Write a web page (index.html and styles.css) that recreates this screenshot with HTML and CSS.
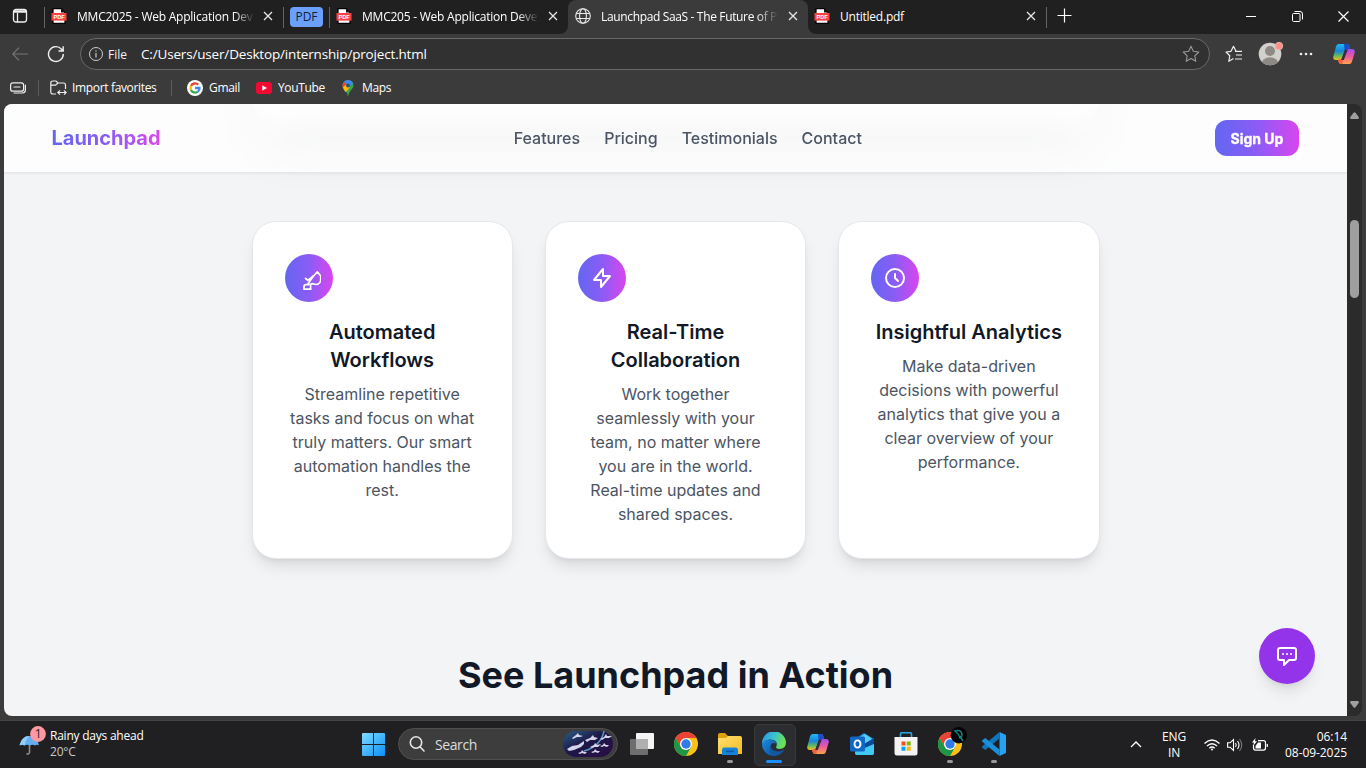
FILE: index.html
```html
<!DOCTYPE html>
<html lang="en">
<head>
<meta charset="utf-8">
<title>Launchpad SaaS - The Future of Productivity</title>
<link rel="stylesheet" href="styles.css">
</head>
<body>
<svg class="defs" width="0" height="0">
  <defs>
    <linearGradient id="cpA" x1="0" y1="0" x2="0" y2="1"><stop offset="0" stop-color="#22b8f5"/><stop offset=".45" stop-color="#1686d9"/><stop offset=".72" stop-color="#5fb865"/><stop offset="1" stop-color="#f2c313"/></linearGradient>
    <linearGradient id="cpB" x1="0" y1="0" x2="0" y2="1"><stop offset="0" stop-color="#a24cf0"/><stop offset=".5" stop-color="#ec5a9c"/><stop offset="1" stop-color="#fda44b"/></linearGradient>
    <linearGradient id="win" x1="0" y1="0" x2="1" y2="1"><stop offset="0" stop-color="#7fdcff"/><stop offset="1" stop-color="#0a8ff5"/></linearGradient>
    <linearGradient id="fold" x1="0" y1="0" x2="1" y2="1"><stop offset="0" stop-color="#ffe074"/><stop offset="1" stop-color="#f8ba1e"/></linearGradient>
    <linearGradient id="edgeTop" x1="0" y1="0" x2="1" y2=".3"><stop offset="0" stop-color="#2391df"/><stop offset=".5" stop-color="#38bfd6"/><stop offset="1" stop-color="#6be354"/></linearGradient>
    <linearGradient id="edgeLow" x1="0" y1="0" x2="1" y2="1"><stop offset="0" stop-color="#1b8ce0"/><stop offset="1" stop-color="#0b4f9f"/></linearGradient>
    <linearGradient id="fish" x1="0" y1="0" x2="1" y2="1"><stop offset="0" stop-color="#285f86"/><stop offset=".45" stop-color="#1d1748"/><stop offset="1" stop-color="#2a0d45"/></linearGradient>
    <symbol id="pdf" viewBox="0 0 16 16"><path d="M2 .7h8.2L14 4.5v10.8H2z" fill="#fff" stroke="#000" stroke-width="1.2"/><path d="M10 .7v3.8h4z" fill="#111"/><rect x=".5" y="5" width="15" height="7.6" fill="#f8423f"/><text x="8" y="10.9" text-anchor="middle" class="pdf-word">PDF</text></symbol>
    <symbol id="close" viewBox="0 0 10 10"><path d="M1 1l8 8M9 1L1 9" stroke="#e6e6e6" stroke-width="1.3" fill="none"/></symbol>
    <symbol id="copilot" viewBox="0 0 22 20"><path d="M5.500 0H14q1.700 0 2.300 2l.8 3H14q-2 0-2.600 2L9 14.200Q8.300 16 6.500 16H3Q-.3 16 .3 12.500L3 2.500Q3.700 0 5.500 0z" fill="url(#cpA)"/><path d="M11 0h3.200q1.600 0 2.200 2l.9 3.300H14q-1.800 0-2.400 1.700z" fill="#1a4fc4"/><path d="M16.500 20H8q-1.700 0-2.300-2l-.7-2.500h2q2.500 0 3.200-2.200L12.600 7Q13.300 5 15 5h4q3.300 0 2.700 3.500L19 17.500q-.7 2.500-2.500 2.500z" fill="url(#cpB)"/><path d="M8 20q-1.700 0-2.300-2L5 15.500h2q2.500 0 3.200-2.200L9.500 20z" fill="#f2653b"/><path d="M12.200 5.500h2.600l-4 10.500H8.200z" fill="#3a2a3a"/></symbol>
    <symbol id="chrome" viewBox="0 0 24 24"><circle cx="12" cy="12" r="12" fill="#fbc116"/><path d="M1.600 6A12 12 0 0 1 22.400 6H12L7 15z" fill="#ea4335"/><path d="M1.600 6A12 12 0 0 0 12 24L17.200 15 7 15z" fill="#1e9648"/><circle cx="12" cy="12" r="6" fill="#fff"/><circle cx="12" cy="12" r="4.700" fill="#2f7bea"/></symbol>
  </defs>
</svg>

<div class="tabstrip">
  <div class="strip-left">
    <div class="workspace"><svg width="16" height="16" viewBox="0 0 16 16" fill="none" stroke="#eee" stroke-width="1.300"><rect x="1.500" y="1.500" width="13" height="12.500" rx="2.500"/><path d="M1.500 3.500h13" stroke-width="2.500"/><path d="M5.500 5v9"/></svg></div>
    <div class="tab first"><svg class="fav"><use href="#pdf"/></svg><span class="tab-title fade">MMC2025 - Web Application Dev</span><svg class="x"><use href="#close"/></svg></div>
    <div class="group"><span class="group-chip">PDF</span></div>
    <div class="tab second"><svg class="fav"><use href="#pdf"/></svg><span class="tab-title fade">MMC205 - Web Application Deve</span><svg class="x"><use href="#close"/></svg></div>
  </div>
  <div class="active-wrap"><div class="tab active"><svg class="globe" viewBox="0 0 16 16" fill="none" stroke="#e8e8e8" stroke-width="1.100"><circle cx="8" cy="8" r="7.300"/><ellipse cx="8" cy="8" rx="3.400" ry="7.300"/><path d="M1.200 5.500h13.600M1.200 10.500h13.600"/></svg><span class="tab-title fade">Launchpad SaaS - The Future of P</span><svg class="x"><use href="#close"/></svg></div></div>
  <div class="strip-right">
    <div class="tab last"><svg class="fav"><use href="#pdf"/></svg><span class="tab-title">Untitled.pdf</span><svg class="x"><use href="#close"/></svg></div>
    <div class="plus"><svg width="15" height="15" viewBox="0 0 15 15" stroke="#fff" stroke-width="1.200"><path d="M7.500 .5v14M.5 7.500h14"/></svg></div>
    <div class="win-controls">
      <span><svg width="10" height="10" viewBox="0 0 10 10"><path d="M0 4.500h10" stroke="#fff"/></svg></span>
      <span><svg width="11" height="11" viewBox="0 0 11 11" fill="none" stroke="#fff"><rect x=".5" y="2.500" width="7.500" height="8" rx="1"/><path d="M2.500 .5H8q2.500 0 2.500 2.500v5.500"/></svg></span>
      <span><svg width="11" height="11" viewBox="0 0 11 11" stroke="#fff" stroke-width="1.200"><path d="M.5 .5l10 10M10.500 .5l-10 10"/></svg></span>
    </div>
  </div>
</div>

<div class="toolbar">
  <svg class="back" width="16" height="14" viewBox="0 0 16 14" fill="none" stroke="#777" stroke-width="1.100"><path d="M16 7H.8M7 .7L.7 7 7 13.300"/></svg>
  <svg class="reload" width="18" height="18" viewBox="0 0 18 18" fill="none" stroke="#eee" stroke-width="1.400"><path d="M16.300 9A7.400 7.400 0 1 1 14.500 4.200L16 6M16.200 1.300V6H11.500"/></svg>
  <div class="address">
    <svg width="14" height="14" viewBox="0 0 14 14" fill="none" stroke="#ccc"><circle cx="7" cy="7" r="6.500"/><path d="M7 6v4.500M7 3.400v1.300" stroke-width="1.200"/></svg>
    <span class="file">File</span><span class="url">C:/Users/user/Desktop/internship/project.html</span>
    <svg class="star" width="18" height="18" viewBox="0 0 18 18" fill="none" stroke="#999" stroke-width="1.100" stroke-linejoin="round"><path d="M9 1.300l2.300 5 5.500.7-4 3.800 1 5.500L9 13.600l-4.800 2.700 1-5.500-4-3.800 5.500-.7z"/></svg>
  </div>
  <svg class="favs" width="18" height="18" viewBox="0 0 18 18" fill="none" stroke="#eee" stroke-width="1.200" stroke-linejoin="round"><path d="M11 6.300L8.500 1.300 6 6.300l-5 .7 3.800 3.700-1 5.600 4.700-2.700M10 6.300h7M11 10h6M10 14h7"/></svg>
  <svg class="avatar" width="26" height="26" viewBox="0 0 26 26"><clipPath id="av"><circle cx="12" cy="14" r="11.300"/></clipPath><circle cx="12" cy="14" r="11.300" fill="#d2d0cd"/><g clip-path="url(#av)" fill="#8d8a86"><circle cx="12" cy="11" r="5"/><ellipse cx="12" cy="24" rx="8.500" ry="6.800"/></g><circle cx="21" cy="6" r="3.700" fill="#ff8f87" stroke="#e9b0aa"/></svg>
  <svg class="dots" width="14" height="4" viewBox="0 0 14 4" fill="#eee"><circle cx="2" cy="2" r="1.300"/><circle cx="7" cy="2" r="1.300"/><circle cx="12" cy="2" r="1.300"/></svg>
  <svg class="cp" width="22" height="20"><use href="#copilot"/></svg>
</div>

<div class="bookmarks">
  <svg class="bm-ws" width="16" height="12" viewBox="0 0 16 12" fill="none" stroke="#eee" stroke-width="1.200"><rect x=".6" y=".8" width="13" height="8.400" rx="2.300"/><path d="M4 5h6M15.400 3v5q0 3-3 3H4" stroke-linecap="round"/></svg>
  <i class="sep"></i>
  <svg class="bm-imp" width="17" height="16" viewBox="0 0 17 16" fill="none" stroke="#eee" stroke-width="1.200"><path d="M6 14H3Q.8 14 .8 12V3Q.8 1 3 1h3l2 2h5.500Q15.500 3 15.500 5v4M.8 5.200h4.700L8 3M8 12.500h8M10 10.300L7.800 12.500 10 14.700M14 10.300l2.200 2.200L14 14.700"/></svg>
  <span class="bm-import">Import favorites</span>
  <i class="sep two"></i>
  <svg class="bm-g" width="16" height="16" viewBox="0 0 16 16" fill="none" stroke-width="2.300"><circle cx="8" cy="8" r="8" fill="#fff"/><path d="M11.200 4.700A4.500 4.500 0 0 0 4 6" stroke="#ea4335"/><path d="M4 6a4.500 4.500 0 0 0 0 4" stroke="#fbbc05"/><path d="M4 10a4.500 4.500 0 0 0 7 1.500" stroke="#34a853"/><path d="M11 11.500A4.500 4.500 0 0 0 12.500 8H8" stroke="#4285f4"/></svg>
  <span class="bm-gmail">Gmail</span>
  <svg class="bm-y" width="16" height="12" viewBox="0 0 16 12"><rect width="16" height="12" rx="3" fill="#f60631"/><path d="M6.300 3.300v5.400L11 6z" fill="#fff"/></svg>
  <span class="bm-yt">YouTube</span>
  <svg class="bm-m" width="12" height="16" viewBox="0 0 12 16"><path d="M6 0a5.500 5.500 0 0 1 5.500 5.500C11.500 9 7.300 10 6.200 16H5.800C5 10 .5 9 .5 5.500A5.500 5.500 0 0 1 6 0z" fill="#34a853"/><path d="M6 0a5.500 5.500 0 0 1 5.100 3.500L6 7 1.800 2A5.500 5.500 0 0 1 6 0z" fill="#4285f4"/><path d="M1.800 2L5 4.800.7 7.500Q-.2 4.500 1.800 2z" fill="#ea4335"/><path d="M.8 7.300l4-3 3 3-4 5Q1.500 9.700.8 7.300z" fill="#fbbc05"/><circle cx="6" cy="5.400" r="2" fill="#31507a"/></svg>
  <span class="bm-maps">Maps</span>
</div>

<div class="viewport">
  <div class="page">
    <div class="hero-panel"></div>
    <header class="site-header">
      <div class="logo"><span>Launchpad</span></div>
      <nav><a>Features</a><a>Pricing</a><a>Testimonials</a><a>Contact</a></nav>
      <button class="signup">Sign Up</button>
    </header>
    <main>
      <section class="cards">
        <article class="card"><div class="badge"><svg class="flow" viewBox="0 0 24 24"><path d="M8 12l2.800 2.300 3.500-2.600 1.700-2M10.500 18.600L15 12l5.300-6.300 3.500 4.500M23.700 10v5q-1.600 3.500-4.700 3.500l-4-.8-3.500 1H9q-2 0-2 2v4M7 23.200h7.500M13.600 24v-5.500"/></svg></div><h3>Automated Workflows</h3><p>Streamline repetitive tasks and focus on what truly matters. Our smart automation handles the rest.</p></article>
        <article class="card"><div class="badge"><svg viewBox="0 0 24 24"><path d="M13 10V3L4 14h7v7l9-11h-7z"/></svg></div><h3>Real-Time Collaboration</h3><p>Work together seamlessly with your team, no matter where you are in the world. Real-time updates and shared spaces.</p></article>
        <article class="card"><div class="badge"><svg viewBox="0 0 24 24"><path d="M12 8v4l3 3m6-3a9 9 0 11-18 0 9 9 0 0118 0z"/></svg></div><h3>Insightful Analytics</h3><p>Make data-driven decisions with powerful analytics that give you a clear overview of your performance.</p></article>
      </section>
      <h2>See Launchpad in Action</h2>
    </main>
    <button class="chat"><svg viewBox="0 0 24 24"><path d="M8 10h.01M12 10h.01M16 10h.01M9 16H5a2 2 0 01-2-2V6a2 2 0 012-2h14a2 2 0 012 2v8a2 2 0 01-2 2h-5l-5 5v-5z"/></svg></button>
  </div>
  <div class="scrollbar">
    <svg width="9" height="7" viewBox="0 0 9 7"><path d="M3.500 .8q1-1.300 2 0L8.700 5q.6 2-1 2H1.300Q-.3 7 .3 5z" fill="#9f9f9f"/></svg>
    <i></i>
    <svg width="9" height="7" viewBox="0 0 9 7"><path d="M3.500 6.200q1 1.300 2 0L8.700 2q.6-2-1-2H1.300Q-.3 0 .3 2z" fill="#9f9f9f"/></svg>
  </div>
</div>

<div class="taskbar">
  <div class="weather">
    <svg width="28" height="32" viewBox="0 0 28 32"><path d="M10.500 18v9.500q-1 2.500-3 1" fill="none" stroke="#8b8b8b" stroke-width="1.600"/><path d="M.5 20.500Q2.500 11 10.500 11t9.500 9.500q-2-1.500-4 0-2.500-1.500-5 0-3-1.500-5.500 0-2.500-1.500-5 0z" fill="#61aef0"/><path d="M.5 20.500Q2.500 11 10.500 11 7 14 5.500 20.500q-2.500-1.500-5 0z" fill="#91cdf8"/><circle cx="19" cy="9" r="7.900" fill="#ff97a0"/><text x="19.200" y="13.300" text-anchor="middle" class="badge-num">1</text></svg>
    <div><div class="w1">Rainy days ahead</div><div class="w2">20°C</div></div>
  </div>
  <div class="start"><svg width="23" height="23" viewBox="0 0 23 23"><path d="M1 0h10v11H0V1q0-1 1-1zM12 0h10q1 0 1 1v10H12zM0 12h11v11H1q-1 0-1-1zM12 12h11v10q0 1-1 1H12z" fill="url(#win)"/></svg></div>
  <div class="search">
    <svg class="lens" width="16" height="16" viewBox="0 0 16 16" fill="none" stroke="#e6e6e6" stroke-width="1.600"><circle cx="7" cy="6.500" r="5.700"/><path d="M11 10.700l4 4.300" stroke-linecap="round"/></svg>
    <span>Search</span>
    <svg class="fishes" width="50" height="26" viewBox="0 0 50 26"><rect width="50" height="26" rx="13" fill="url(#fish)"/><path d="M41 0q-3 15-20 20" stroke="#5898bd" stroke-width="1.500" fill="none"/><g fill="#d4d5eb"><path d="M4 18l5-3 6-1 6-4v3l-3 3-7 3-5 1zM9 7l4-3 2-2 1 2 4 1-3 1-3 0-4 2zM22 9l5-2 3-3 1 2 4 1-3 2-5 0-3 2zM37 8l4-2 2-3 1 2 5 0-3 2-4 0-3 2zM27 16l4-2 1-2 2 2 4-1-3 3-4 0-2 1zM15 22l3-1 1-2 2 2 3 0-2 2-3-1-2 1zM28 21l3-1 1-2 2 2 3 0-2 2-3-1-2 1zM37 15l3-1 1-2 2 2 3 0-2 2-3-1-2 1z"/></g></svg>
  </div>
  <div class="apps">
    <div class="app"><svg width="24" height="22" viewBox="0 0 24 22"><rect x="6" width="18" height="16" rx="1" fill="#f5f5f5"/><rect y="6" width="18" height="16" rx="1" fill="#777" opacity=".9"/><rect x="6" y="6" width="12" height="10" fill="#b0b0b0"/></svg></div>
    <div class="app"><svg width="24" height="24"><use href="#chrome"/></svg></div>
    <div class="app run"><svg width="24" height="22" viewBox="0 0 24 22"><path d="M0 2q0-2 2-2h5l3 3h12v5H0z" fill="#e0a008"/><path d="M0 5h8l2-2h12q2 0 2 2v16H0z" fill="url(#fold)"/><path d="M4 22v-5q0-2.500 2.500-2.500h11Q20 14.500 20 17v5z" fill="#1683d8"/><rect x="8" y="17.500" width="8" height="1.800" rx=".9" fill="#0a5ca8"/></svg></div>
    <div class="app current"><svg width="24" height="24" viewBox="0 0 24 24"><path d="M0 12A12 12 0 0 1 24 10.500Q24 17 17.500 17 13 17 14.500 14 16 8.500 10 7.700 4 7 0 12z" fill="url(#edgeTop)"/><path d="M0 12Q2 7.500 9 7.700q5 .5 5.500 4-5-2-6 2.800Q8.500 20 14 23.800A12 12 0 0 1 0 12z" fill="url(#edgeLow)"/><path d="M8.500 13.500Q9 18.500 15 19.300q4 .5 7.500-2Q19 24 12.500 24 5.500 21 8.500 13.500z" fill="#12579f"/></svg></div>
    <div class="app"><svg width="22" height="20"><use href="#copilot"/></svg></div>
    <div class="app"><svg width="24" height="22" viewBox="0 0 24 22"><path d="M5 6l9-6 10 6v14q0 2-2 2H7q-2 0-2-2z" fill="#1692e2"/><path d="M8 5l7-4 7 5-7 8z" fill="#58ccf5"/><path d="M14 11l10-6v6l-9 6z" fill="#084a98"/><path d="M5 19l19-8v9q0 2-2 2H7q-2 0-2-2z" fill="#42c8f2"/><rect y="3.500" width="15" height="15" rx="1.500" fill="#0f68c4"/><ellipse cx="7.500" cy="11" rx="3" ry="3.600" fill="none" stroke="#fff" stroke-width="1.900"/></svg></div>
    <div class="app"><svg width="24" height="24" viewBox="0 0 24 24"><path d="M6.500 6V2q0-1.300 1.300-1.300h8.400q1.300 0 1.300 1.300v4" fill="none" stroke="#25a9e6" stroke-width="1.600"/><path d="M.5 5h23v16q0 2.500-2.500 2.500H3Q.5 23.500 .5 21z" fill="#f3f3f3"/><path d="M7.500 9.500h4v4h-4z" fill="#f25022"/><path d="M12.700 9.500h4v4h-4z" fill="#7fba00"/><path d="M7.500 14.700h4v4h-4z" fill="#00a4ef"/><path d="M12.700 14.700h4v4h-4z" fill="#ffb900"/></svg></div>
    <div class="app run profile"><svg width="29" height="29" viewBox="0 0 29 29"><use href="#chrome" x="0" y="5" width="24" height="24"/><circle cx="20.800" cy="8.200" r="8.200" fill="#000"/><path d="M17 4q6-2 7 3 0 4-2 4-1-4-5-7zM22 9l3 5" fill="none" stroke="#16827f" stroke-width="1.500"/></svg></div>
    <div class="app run"><svg width="24" height="24" viewBox="0 0 24 24"><path d="M17.500 0L24 3v18l-6.500 3z" fill="#26a2ee"/><path d="M17.500 0v6.500L3.300 18 .3 15.700q-.6-.8 0-1.500z" fill="#0f75bd"/><path d="M17.500 24v-6.500L3.300 6 .3 8.300q-.6.800 0 1.500z" fill="#1c8fdb"/></svg></div>
  </div>
  <div class="tray">
    <svg class="chev" width="12" height="7" viewBox="0 0 12 7" fill="none" stroke="#fff" stroke-width="1.400"><path d="M1 6l5-5 5 5"/></svg>
    <div class="lang">ENG<br>IN</div>
    <svg class="wifi" width="16" height="12" viewBox="0 0 16 12" fill="none" stroke="#fff" stroke-width="1.300"><path d="M.5 4.500q7.500-7 15 0M3 7q5-4.600 10 0M5.300 9.300q2.700-2.500 5.400 0"/><circle cx="8" cy="10.500" r="1" fill="#fff" stroke="none"/></svg>
    <svg class="vol" width="16" height="14" viewBox="0 0 16 14" fill="none" stroke="#fff" stroke-width="1.100"><path d="M.6 4.800h2.500L6.500 1.500v11L3.100 9.200H.6zM8.500 5q1.500 2 0 4M10.500 3q3 4 0 8"/><path d="M12.500 1q4.500 6 0 12" stroke="#777"/></svg>
    <svg class="bat" width="16" height="13" viewBox="0 0 16 13" fill="none" stroke="#fff" stroke-width="1.200"><path d="M6 2.600h5.500q2 0 2 2v5.500q0 2-2 2H3.500q-2 0-2-2V7M15.300 6v3"/><path d="M6 4.500h3v6H3.500V8z" fill="#fff" stroke="none"/><path d="M3.500 0L0 4.500h2L1 8l4-4.700H3z" fill="#fff" stroke="none"/></svg>
    <div class="clock">06:14<br>08-09-2025</div>
  </div>
</div>
</body>
</html>
```
FILE: styles.css
```css
* { box-sizing: border-box; }
html, body { margin: 0; height: 100%; overflow: hidden; }
body { width: 1366px; height: 768px; display: flex; flex-direction: column; background: #3b3b3b; color: #fff; font-family: "Open Sans", "Noto Sans", sans-serif; font-size: 12px; }
svg { display: block; flex: none; }
.defs { position: absolute; }
.pdf-word { font: 700 5.6px "Liberation Sans", sans-serif; fill: #fff; }

/* Tab strip */
.tabstrip { display: flex; height: 34px; flex: none; background: #3b3b3b; }
.strip-left { display: flex; width: 568px; background: #202020; border-bottom-right-radius: 8px; }
.strip-right { display: flex; flex: 1; background: #202020; border-bottom-left-radius: 8px; }
.active-wrap { width: 240px; background: linear-gradient(#202020 50%, #3b3b3b 50%); }
.workspace { width: 44px; padding: 8px 0 0 12px; }
.tab { display: flex; align-items: center; height: 32px; line-height: 32px; position: relative; }
.first { width: 239px; padding-left: 7px; }
.second { width: 239px; padding-left: 7px; }
.last { width: 238px; padding-left: 6px; }
.first::before, .second::before, .group::before, .plus::before { content: ""; width: 1px; height: 21px; background: #636363; position: absolute; left: 0; top: 7px; }
.active { background: #3b3b3b; height: 34px; padding: 0 0 2px 7px; border-radius: 8px 8px 0 0; }
.fav, .globe { width: 16px; height: 16px; }
.tab-title { width: 177px; margin-left: 10px; padding-top: 1px; line-height: 31px; white-space: nowrap; overflow: hidden; letter-spacing: -.23px; }
.first .tab-title { width: 178px; }
.active .tab-title { margin-left: 10px; letter-spacing: -.35px; }
.fade { -webkit-mask-image: linear-gradient(90deg, #000 88%, transparent); mask-image: linear-gradient(90deg, #000 88%, transparent); }
.x { width: 10px; height: 10px; position: absolute; right: 10px; top: 11px; }
.group { width: 46px; position: relative; padding: 7px 0 0 7px; }
.group-chip { display: block; width: 33px; height: 20px; line-height: 19px; background: #6aa0fb; color: #13203a; border-radius: 4px; text-align: center; }
.plus { width: 182px; position: relative; padding: 8px 0 0 11px; }
.win-controls { display: flex; }
.win-controls span { width: 46px; height: 33px; display: grid; place-items: center; }

/* Toolbar */
.toolbar { display: flex; align-items: center; height: 40px; flex: none; padding-left: 12px; }
.reload { margin-left: 19px; }
.address { display: flex; align-items: center; width: 1130px; height: 32px; margin-left: 15px; padding: 0 9px 0 8px; border: 1px solid #696969; border-radius: 16px; background: #313131; }
.file { margin-left: 5px; width: 33px; color: #f2f2f2; }
.url { font-size: 13.5px; letter-spacing: -.17px; }
.star { margin-left: auto; }
.favs { margin-left: 15px; }
.avatar { margin: -3px 0 0 15px; }
.dots { margin-left: 15px; }
.cp { margin-left: 20px; }

/* Favorites bar */
.bookmarks { display: flex; align-items: center; height: 30px; flex: none; padding: 0 0 3px 10px; letter-spacing: -.34px; }
.sep { width: 1px; height: 16px; background: #5c5c5c; margin-left: 12px; }
.bm-imp { margin-left: 11px; }
.bm-import { margin-left: 5px; width: 85px; }
.sep.two { margin-left: 14px; }
.bm-g { margin-left: 15px; }
.bm-gmail { margin-left: 6px; width: 31px; }
.bm-y { margin-left: 16px; }
.bm-yt { margin-left: 6px; width: 46px; }
.bm-m { margin-left: 18px; }
.bm-maps { margin-left: 8px; }
.bookmarks span { white-space: nowrap; }

/* Web page */
.viewport { display: flex; flex: none; width: 1358px; height: 612px; margin-left: 4px; border-radius: 8px; overflow: hidden; }
.page { position: relative; width: 1343px; height: 612px; background: #f3f4f6; overflow: hidden; font-family: Inter, sans-serif; font-size: 16px; line-height: 24px; color: #4b5563; }
.site-header { position: absolute; inset: 0 0 auto; display: flex; justify-content: space-between; align-items: center; height: 69px; padding: 0 48px 0 47.5px; background: rgba(255,255,255,.8); border-bottom: 1px solid #e5e7eb; -webkit-backdrop-filter: blur(12px); backdrop-filter: blur(12px); box-shadow: 0 1px 2px rgba(0,0,0,.05); z-index: 2; }
.logo span { font-size: 20px; font-weight: 700; background: linear-gradient(90deg, #6366f1, #8b5cf6 50%, #d946ef); -webkit-background-clip: text; background-clip: text; color: transparent; }
nav { display: flex; gap: 24px; font-weight: 500; }
.signup { display: block; width: 84px; height: 36px; border: 0; border-radius: 12px; padding: 0; background: linear-gradient(90deg, #6366f1, #8b5cf6 50%, #d946ef); color: #fff; font: 700 14px Inter, sans-serif; -webkit-text-stroke: .35px #fff; }
.hero-panel { width: 848px; height: 419px; margin: -400px auto 0; background: #fff; border-radius: 24px; box-shadow: 0 25px 50px -12px rgba(0,0,0,.25); }
main { padding-top: 98px; text-align: center; position: relative; }
.cards { display: grid; grid-template-columns: repeat(3, 1fr); gap: 32px; width: 848px; margin: 0 auto; }
.card { height: 338px; padding: 32px; background: #fff; border: 1px solid #e5e7eb; border-radius: 24px; box-shadow: 0 10px 15px -3px rgba(0,0,0,.1), 0 4px 6px -4px rgba(0,0,0,.1); }
.badge { width: 48px; height: 48px; display: grid; place-items: center; border-radius: 50%; background: linear-gradient(90deg, #6366f1, #8b5cf6 50%, #d946ef); }
.badge svg, .chat svg { width: 24px; height: 24px; fill: none; stroke: #fff; stroke-width: 2; stroke-linecap: round; stroke-linejoin: round; }
.badge .flow { stroke-width: 1.7; stroke-linecap: butt; }
.card h3 { margin: 16px 0 8px; color: #111827; font-size: 20px; font-weight: 600; line-height: 28px; }
.card p { margin: 0; }
h2 { margin: 96px 0 0; color: #111827; font-size: 36px; line-height: 40px; font-weight: 700; }
.chat { position: absolute; right: 32px; bottom: 32px; width: 56px; height: 56px; border: 0; padding: 0; border-radius: 50%; display: grid; place-items: center; background: #9333ea; box-shadow: 0 10px 15px -3px rgba(0,0,0,.1), 0 4px 6px -4px rgba(0,0,0,.1); z-index: 2; }
.scrollbar { width: 15px; background: #2b2b2b; display: flex; flex-direction: column; align-items: center; padding: 8px 0; }
.scrollbar i { width: 9px; height: 78px; margin: 101px 0 auto; background: #9f9f9f; border-radius: 5px; }

/* Taskbar */
.taskbar { display: flex; height: 48px; margin-top: 4px; flex: none; background: #202022; border-top: 1px solid #444; }
.weather { display: flex; width: 362px; padding: 4px 0 0 19px; gap: 3px; }
.w1, .w2 { line-height: 16px; letter-spacing: -.23px; }
.weather > div { padding-top: 3px; }
.w2 { color: #c9c9c9; }
.badge-num { font: 12px "Open Sans", sans-serif; fill: #222; }
.start { width: 36px; padding-top: 12px; }
.search { display: flex; align-items: center; width: 220px; height: 32px; margin-top: 7px; padding: 0 4px 0 10px; border: 1px solid #4f4f4f; border-radius: 16px; background: #3d3d3e; font-size: 14px; color: #ddd; letter-spacing: -.4px; }
.search span { margin-left: 10px; }
.fishes { margin-left: auto; }
.apps { display: flex; margin-left: 2px; }
.app { width: 44px; height: 47px; display: grid; place-items: center; position: relative; padding-bottom: 1px; }
.app svg { position: relative; }
.profile svg { margin: -5px 0 0 5px; }
.run::after, .current::after { content: ""; position: absolute; left: 19px; top: 39px; width: 6px; height: 3px; border-radius: 2px; background: #999; }
.current::after { left: 14px; width: 16px; background: #1990ff; }
.current::before { content: ""; position: absolute; left: 2px; top: 3px; width: 40px; height: 40px; background: #2c2d30; border: 1px solid #38393b; border-radius: 5px; }
.tray { display: flex; align-items: center; margin-left: auto; padding-right: 19px; letter-spacing: -.2px; line-height: 16px; }
.lang { width: 30px; margin-left: 17px; text-align: center; }
.wifi { margin-left: 15px; }
.vol { margin-left: 7px; }
.bat { margin-left: 9px; }
.clock { width: 79px; text-align: right; white-space: nowrap; letter-spacing: -.07px; }
```
